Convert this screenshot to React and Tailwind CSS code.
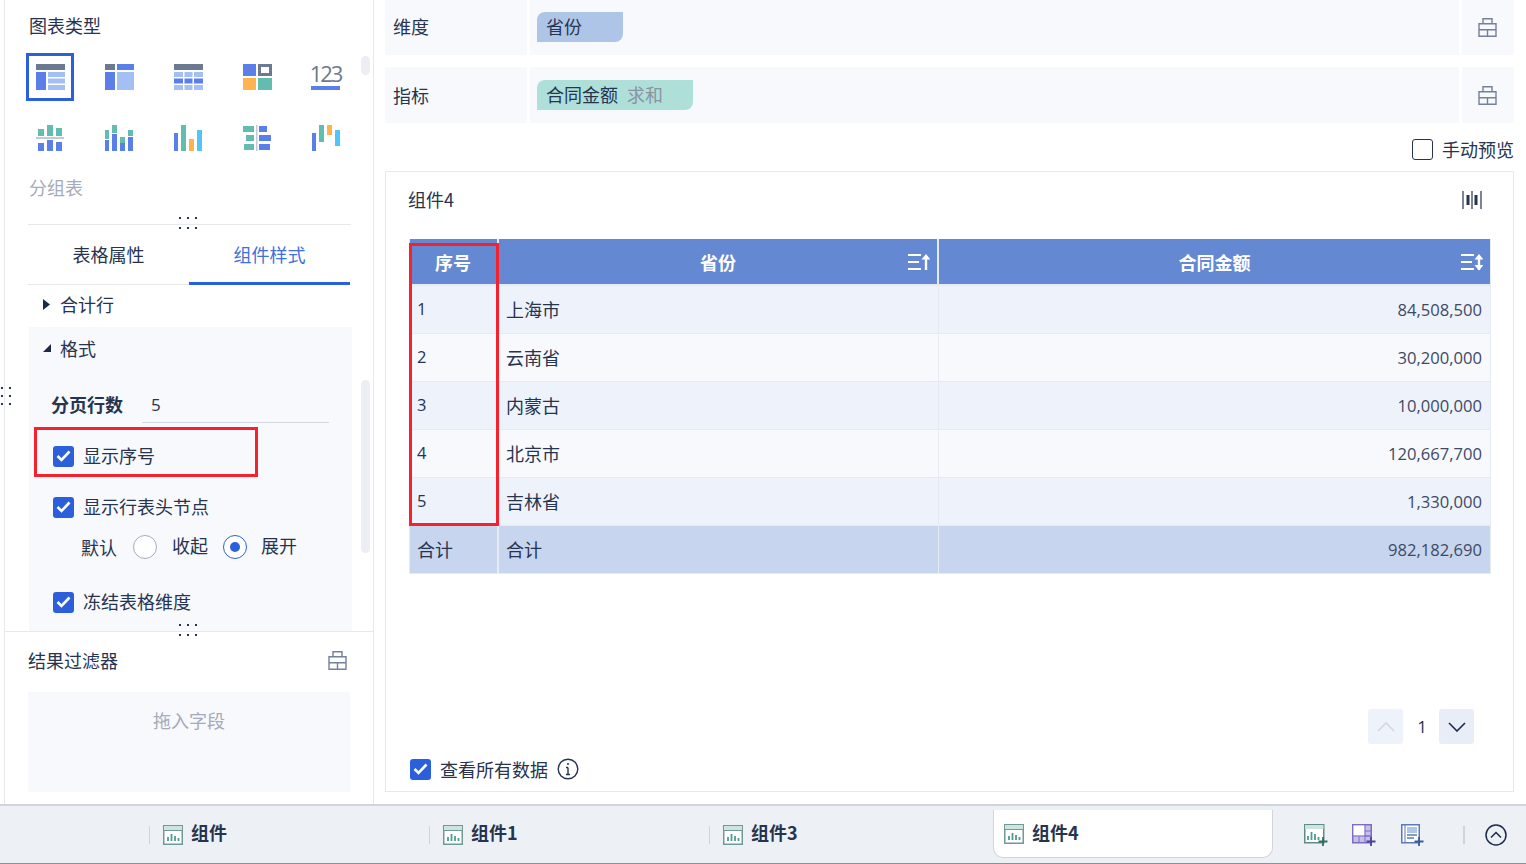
const G = "#6b7a90", B = "#5b7fe8", L = "#a3bff4", T = "#62bdb0", O = "#ffb24d", C = "#4fc6f7";

function Rects({ items, w = 30, h = 26 }) {
  return (
    <svg width={w} height={h} viewBox={`0 0 ${w} ${h}`}>
      {items.map((r, i) => (
        <rect key={i} x={r[0]} y={r[1]} width={r[2]} height={r[3]} fill={r[4]} />
      ))}
    </svg>
  );
}

const chartIcons = [
  [[0, 0, 29, 6, G], [0, 8, 10, 18, B], [12, 8, 17, 5, L], [12, 14.5, 17, 5, L], [12, 21, 17, 5, L]],
  [[0, 0, 10, 6, G], [12, 0, 17, 6, B], [0, 8, 10, 18, B], [12, 8, 17, 18, L]],
  [[0, 0, 29, 6, G], [0, 8, 9, 5, L], [10.5, 8, 8, 5, L], [20, 8, 9, 5, L], [0, 14.5, 9, 5, B], [10.5, 14.5, 8, 5, B], [20, 14.5, 9, 5, B], [0, 21, 9, 5, L], [10.5, 21, 8, 5, L], [20, 21, 9, 5, L]],
  null,
  null,
  [[2, 4, 6, 7, T], [11, 0, 6, 11, T], [20, 3, 6, 8, T], [-1, 12, 29, 2, "#c3c9d6"], [2, 18, 6, 8, B], [11, 15, 6, 11, B], [20, 17, 6, 9, B]],
  [[-1, 5, 5, 9, T], [-1, 15, 5, 11, B], [7, 0, 5, 8, T], [7, 9, 5, 17, B], [15, 12, 5, 6, T], [15, 18, 5, 8, B], [23, 5, 5, 6, T], [23, 12, 5, 14, B]],
  [[-1, 8, 5, 18, B], [7, 0, 5, 26, T], [15, 14, 5, 12, O], [23, 5, 5, 21, C]],
  [[-1, 1, 12, 6, T], [3, 10, 8, 6, T], [1, 19, 10, 6, T], [13, 0, 1.5, 26, "#c3c9d6"], [16, 1, 8, 6, B], [16, 10, 12, 6, B], [16, 19, 11, 6, B]],
  [[-1, 8, 5, 18, B], [7, 0, 5, 17, T], [15, 0, 5, 10, O], [23, 5, 5, 16, C]],
];

function ChartIcon({ i }) {
  if (i === 3)
    return (
      <svg width="30" height="26" viewBox="0 0 30 26">
        <rect x="0" y="0" width="13" height="12" fill={B} />
        <rect x="16.5" y="1.5" width="11" height="9" fill="none" stroke={G} strokeWidth="3" />
        <rect x="0" y="14" width="13" height="12" fill={O} />
        <rect x="15" y="14" width="14" height="12" fill={T} />
      </svg>
    );
  if (i === 4)
    return (
      <div className="flex flex-col items-center w-[30px] h-[26px] overflow-visible">
        <span className="text-[22px] leading-[20px] tracking-[-2px] text-[#6b7a90] font-['Open_Sans',sans-serif] font-medium -mt-[1px] -ml-[2px]">123</span>
        <span className="w-[29px] h-[4px] bg-[#5b7fe8] mt-[3px] shrink-0 -ml-[2px]"></span>
      </div>
    );
  return <Rects items={chartIcons[i]} />;
}

function Case({ color = "#74819a" }) {
  return (
    <svg width="19" height="19" viewBox="0 0 19 19" fill="none" stroke={color} strokeWidth="1.4">
      <path d="M1 5.7h17v12.6H1zM5 5.7V0.8h9v4.9M1 11.8h17M9.5 11.8v6.5" />
    </svg>
  );
}

function Check() {
  return (
    <span className="w-[21px] h-[21px] rounded-[3px] bg-[#2b5fdb] flex items-center justify-center shrink-0">
      <svg width="15" height="12" viewBox="0 0 15 12" fill="none" stroke="white" strokeWidth="2.6">
        <path d="M1.5 6l4 4 8-8.5" />
      </svg>
    </span>
  );
}

function Dots() {
  return (
    <div className="flex flex-col gap-[8px] absolute left-[174px] -translate-y-1/2 pointer-events-none">
      {[0, 1].map((k) => (
        <div key={k} className="flex gap-[6px]">
          <span className="w-[2px] h-[2px] bg-[#27344f]"></span>
          <span className="w-[2px] h-[2px] bg-[#27344f]"></span>
          <span className="w-[2px] h-[2px] bg-[#27344f]"></span>
        </div>
      ))}
    </div>
  );
}

function SortIcon({ both }) {
  return (
    <svg width="22" height="18" viewBox="0 0 22 18" fill="none" stroke="white" strokeWidth="2">
      <path d="M0 2h13M0 9h11M0 16h13" />
      <path d="M18 17V3" strokeWidth="2.4" />
      <path d="M13.5 6.5L18 1l4.5 5.5z" fill="white" stroke="none" />
      {both && <path d="M13.5 12L18 17.5l4.5-5.5z" fill="white" stroke="none" />}
    </svg>
  );
}

function TabIcon() {
  return (
    <svg width="20" height="20" viewBox="0 0 20 20" fill="none">
      <rect x="0.75" y="0.75" width="18.5" height="18.5" stroke="#6f9a96" strokeWidth="1.5" fill="#ffffff" />
      <rect x="1" y="1" width="18" height="4" fill="#cfe4df" />
      <path d="M1 5.5h18" stroke="#6f9a96" />
      <path d="M5 16v-4M8.5 16V9M12 16v-5M15.5 16v-3" stroke="#4b9d90" strokeWidth="1.8" />
    </svg>
  );
}

const rows = [
  ["1", "上海市", "84,508,500"],
  ["2", "云南省", "30,200,000"],
  ["3", "内蒙古", "10,000,000"],
  ["4", "北京市", "120,667,700"],
  ["5", "吉林省", "1,330,000"],
];

function Row({ label, pill, pillClass, padClass, labelClass }) {
  return (
    <div className="flex h-full gap-[3px]">
      <div className={`w-[142px] bg-[#f7f9fd] flex items-center pl-[8px] ${labelClass}`}>{label}</div>
      <div className={`flex-1 bg-[#f7f9fd] pl-[7px] ${padClass}`}>
        <div className={`h-[30px] rounded-tl-[8px] rounded-br-[8px] flex items-center pl-[9px] pb-[2px] ${pillClass}`}>{pill}</div>
      </div>
      <div className="w-[52px] bg-[#f7f9fd] flex items-center justify-center pr-[2px]"><Case /></div>
    </div>
  );
}

export default function App() {
  return (
    <div className="w-[1526px] h-[864px] overflow-hidden bg-white flex flex-col text-[18px] text-[#27344f] font-['Noto_Sans_CJK_SC','Noto_Sans',sans-serif]">
      <div className="flex h-[804px]">
        {/* left */}
        <div className="ml-[4px] border-l border-r border-[#e6e8ee] relative flex flex-col shrink-0 w-[370px]">
          <div className="h-[631px] flex flex-col pl-[23px] pr-[22px] relative">
            <div className="pt-[12px] h-[49px] leading-[26px]"><span className="ml-[1px]">图表类型</span></div>
            <div className="grid grid-cols-[48px_48px_48px_48px_48px] gap-x-[21px] gap-y-[13px] ml-[-2px] mt-[4px]">
              {chartIcons.map((_, i) => (
                <div key={i} className={`h-[48px] flex items-center justify-center pl-[1px] ${i === 0 ? "border-[3px] border-[#2b5fdb]" : ""}`}>
                  <ChartIcon i={i} />
                </div>
              ))}
            </div>
            <div className="h-[24px] mt-[13px] leading-[24px] text-[#a5abb8] ml-[1px]">分组表</div>
            <div className="h-[26px] border-b border-[#e6e8ee]"></div>
            <div className="flex h-[60px]">
              <div className="w-[161px] flex items-center justify-center border-b border-[#e6e8ee]">表格属性</div>
              <div className="w-[161px] flex items-center justify-center border-b-[3px] border-[#2b5fdb] text-[#3f6fdc] pt-[1px]">组件样式</div>
            </div>
            <div className="h-[42px] flex items-center ml-[15px] gap-[9px] pb-[4px]">
              <svg width="8" height="11" viewBox="0 0 8 11"><path d="M0 0l7 5.5L0 11z" fill="#1c2a4a" /></svg>
              <span>合计行</span>
            </div>
            <div className="bg-[#f7f9fd] w-[323px] ml-[1px] flex-1 overflow-hidden">
              <div className="h-[44px] flex items-center pl-[14px] gap-[9px] pb-[2px]">
                <svg width="8" height="8" viewBox="0 0 8 8"><path d="M8 0v8H0z" fill="#1c2a4a" /></svg>
                <span>格式</span>
              </div>
              <div className="flex items-center h-[41px] mt-[13px] pl-[22px]">
                <span className="font-bold w-[91px]">分页行数</span>
                <span className="w-[187px] h-[37px] pt-[5px] leading-[28px] pl-[9px] border-b border-[#d5d8e0] font-['Open_Sans',sans-serif] text-[17px]">5</span>
              </div>
              <div className="flex items-center gap-[9px] pl-[24px] h-[26px] mt-[18px]"><Check /><span className="-mt-[1px]">显示序号</span></div>
              <div className="flex items-center gap-[9px] pl-[24px] h-[26px] mt-[25px]"><Check /><span className="-mt-[1px]">显示行表头节点</span></div>
              <div className="flex items-center h-[30px] mt-[12px] pl-[52px]">
                <span className="w-[52px]">默认</span>
                <span className="w-[24px] h-[24px] rounded-full border border-[#a5abb8] bg-white"></span>
                <span className="ml-[15px] w-[51px] -mt-[4px]">收起</span>
                <span className="w-[24px] h-[24px] rounded-full border border-[#2b5fdb] bg-white flex items-center justify-center">
                  <span className="w-[10px] h-[10px] rounded-full bg-[#2b5fdb]"></span>
                </span>
                <span className="ml-[14px] -mt-[4px]">展开</span>
              </div>
              <div className="flex items-center gap-[9px] pl-[24px] h-[26px] mt-[27px]"><Check /><span className="-mt-[1px]">冻结表格维度</span></div>
            </div>
          </div>
          <div className="flex-1 border-t border-[#e6e8ee] pl-[23px] pr-[23px]">
            <div className="h-[60px] flex items-center justify-between pr-[3px] pb-[3px]">
              <span>结果过滤器</span>
              <Case />
            </div>
            <div className="h-[100px] bg-[#f7f9fd] text-center text-[#a5abb8] pt-[15px] leading-[26px]">拖入字段</div>
          </div>
          {/* overlays */}
          <div className="absolute top-[223px] left-0"><Dots /></div>
          <div className="absolute top-[630px] left-0"><Dots /></div>
          <div className="absolute left-[356px] top-[56px] w-[9px] h-[19px] rounded-[5px] bg-[#eceef3]"></div>
          <div className="absolute left-[356px] top-[380px] w-[9px] h-[173px] rounded-[5px] bg-[#eceef3]"></div>
          <div className="absolute left-[29px] top-[427px] w-[224px] h-[50px] border-[3px] border-[#f5222d]"></div>
          <div className="absolute -left-[4px] top-[387px] flex flex-col gap-[6px]">
            {[0, 1, 2].map((k) => (
              <div key={k} className="flex gap-[6px]"><span className="w-[2px] h-[2px] bg-[#27344f]"></span><span className="w-[2px] h-[2px] bg-[#27344f]"></span></div>
            ))}
          </div>
        </div>
        {/* right */}
        <div className="flex-1 pl-[12px] pr-[12px] flex flex-col ml-[-1px] min-w-0">
          <div className="h-[55px]">
            <Row label="维度" pill={<span>省份</span>} pillClass="w-[86px] bg-[#afc5e8]" padClass="pt-[12px]" labelClass="pb-[2px]" />
          </div>
          <div className="h-[12px]"></div>
          <div className="h-[56px]">
            <Row label="指标" pill={<><span>合同金额</span><span className="text-[#8b93a1] ml-[9px]">求和</span></>} pillClass="w-[156px] bg-[#aedfd9]" padClass="pt-[13px]" labelClass="" />
          </div>
          <div className="h-[48px] flex items-center justify-end gap-[9px] pt-[5px]">
            <span className="w-[21px] h-[21px] rounded-[3px] border border-[#27344f] bg-white"></span>
            <span>手动预览</span>
          </div>
          <div className="flex-1 border border-[#e6e8ee] flex flex-col relative mb-[12px]">
            <div className="h-[67px] flex items-center justify-between pl-[22px] pr-[31px] pb-[12px]">
              <span>组件4</span>
              <svg width="20" height="20" viewBox="0 0 20 20" fill="none" stroke="#27344f">
                <path d="M1 1v18M19 1v18M10 1v18" strokeWidth="1.2" />
                <path d="M6 5v10M14 5v10" strokeWidth="3" />
              </svg>
            </div>
            <div className="ml-[23px] w-[1082px] border border-[#e6eaf3] border-t-0 text-[#27344f] bg-[#e6eaf3]">
              <div className="flex h-[45px] mb-[1px] bg-[#6488d2] text-white font-bold">
                <div className="w-[89px] flex items-center justify-center border-r-2 border-[#e6eaf3] pr-[1px] pt-[2px]">序号</div>
                <div className="w-[440px] flex items-center justify-center relative border-r-2 border-[#e6eaf3] pt-[2px]">
                  省份
                  <span className="absolute right-[7px] top-[14px]"><SortIcon /></span>
                </div>
                <div className="flex-1 flex items-center justify-center relative pt-[2px]">
                  合同金额
                  <span className="absolute right-[7px] top-[14px]"><SortIcon both /></span>
                </div>
              </div>
              {rows.map((r, i) => (
                <div key={r[0]} className={`flex h-[48px] border-t border-[#e6eaf3] ${i % 2 === 0 ? "bg-[#edf2fb]" : "bg-[#f7f9fd]"}`}>
                  <div className="w-[89px] pl-[7px] flex items-center border-r-2 border-[#e6eaf3] font-['Open_Sans',sans-serif] text-[16.5px]">{r[0]}</div>
                  <div className="w-[440px] pl-[7px] flex items-center border-r border-[#e6eaf3]">{r[1]}</div>
                  <div className="flex-1 pr-[8px] pt-[2px] flex items-center justify-end font-['Open_Sans',sans-serif] text-[16.6px] text-[#3d4a66]">{r[2]}</div>
                </div>
              ))}
              <div className="flex h-[48px] border-t border-[#e6eaf3] bg-[#c7d5ef]">
                <div className="w-[89px] pl-[7px] flex items-center border-r-2 border-[#e6eaf3]">合计</div>
                <div className="w-[440px] pl-[7px] flex items-center border-r border-[#e6eaf3]">合计</div>
                <div className="flex-1 pr-[8px] pt-[2px] flex items-center justify-end font-['Open_Sans',sans-serif] text-[16.6px] text-[#3d4a66]">982,182,690</div>
              </div>
            </div>
            <div className="flex justify-end items-center pr-[39px] mt-[135px] h-[35px]">
              <span className="w-[35px] h-[35px] rounded-[3px] bg-[#edf2fb] flex items-center justify-center">
                <svg width="18" height="10" viewBox="0 0 18 10" fill="none" stroke="#d3d7df" strokeWidth="1.6"><path d="M1 9l8-8 8 8" /></svg>
              </span>
              <span className="w-[36px] text-center text-[17px] pl-[2px] font-['Open_Sans',sans-serif]">1</span>
              <span className="w-[35px] h-[35px] rounded-[3px] bg-[#e8edf7] flex items-center justify-center">
                <svg width="18" height="10" viewBox="0 0 18 10" fill="none" stroke="#1c2a4a" strokeWidth="1.6"><path d="M1 1l8 8 8-8" /></svg>
              </span>
            </div>
            <div className="flex items-center gap-[9px] ml-[24px] mt-[13px] h-[24px]">
              <Check />
              <span>查看所有数据</span>
              <svg width="22" height="22" viewBox="0 0 22 22" fill="none" stroke="#27344f" strokeWidth="1.4">
                <circle cx="11" cy="11" r="9.8" />
                <path d="M11 9.5v7M9 9.5h2M9 16.5h4" />
                <circle cx="11" cy="6" r="1" fill="#27344f" stroke="none" />
              </svg>
            </div>
          </div>
        </div>
      </div>
      {/* bottom */}
      <div className="h-[60px] bg-[#edf0f5] border-t-2 border-b border-t-[#d0d4dd] border-b-[#8d9096] flex font-bold text-[18px] relative">
        <div className="flex pl-[149px] w-[1273px]">
          {["组件", "组件1", "组件3"].map((t) => (
            <div key={t} className="w-[280px] h-full flex items-center">
              <span className="w-[1px] h-[18px] bg-[#cfd3da] mr-[13px]"></span>
              <TabIcon />
              <span className="ml-[8px] -mt-[4px]">{t}</span>
            </div>
          ))}
          <div className="ml-[4px] w-[280px] h-[48px] mt-[4px] bg-white rounded-b-[10px] border border-t-0 border-[#d0d4dd] flex items-center pl-[10px]">
            <TabIcon />
            <span className="ml-[8px] -mt-[2px]">组件4</span>
          </div>
        </div>
        <div className="flex items-center pl-[31px]">
          <svg width="24" height="22" viewBox="0 0 24 22" fill="none">
            <rect x="0.75" y="0.75" width="19" height="18" stroke="#5d8e88" strokeWidth="1.5" fill="#fff" />
            <rect x="1" y="1" width="18.5" height="4" fill="#cfe4df" />
            <path d="M4 16v-4M7.5 16V8M11 16v-6M14.5 16v-3" stroke="#4b9d90" strokeWidth="1.8" />
            <path d="M19 13v9M14.5 17.5h9" stroke="#2f6f62" strokeWidth="1.8" />
          </svg>
          <svg className="ml-[24px]" width="24" height="22" viewBox="0 0 24 22" fill="none">
            <rect x="0.75" y="0.75" width="18.5" height="18" fill="#c9c0ea" stroke="#7d6cc0" strokeWidth="1.5" />
            <rect x="1.5" y="1.5" width="11" height="10" fill="#fff" />
            <path d="M13 1v18M1 12h18M7 12v7M13 7h6M13 12h6" stroke="#7d6cc0" strokeWidth="1" />
            <path d="M19 13v9M14.5 17.5h9" stroke="#4a3fa6" strokeWidth="1.8" />
          </svg>
          <svg className="ml-[25px]" width="24" height="22" viewBox="0 0 24 22" fill="none">
            <rect x="0.75" y="0.75" width="17.5" height="18" fill="#fff" stroke="#5c79b8" strokeWidth="1.5" />
            <path d="M4 1v18" stroke="#5c79b8" />
            <rect x="6" y="3" width="10" height="6" fill="#afc5e8" />
            <path d="M6 11h10M6 14h7" stroke="#5c79b8" strokeWidth="1.4" />
            <path d="M18 13v9M13.5 17.5h9" stroke="#3a5a9f" strokeWidth="1.8" />
          </svg>
          <span className="ml-[38px] w-[2px] h-[18px] bg-[#cfd3da]"></span>
          <svg className="ml-[20px]" width="22" height="22" viewBox="0 0 22 22" fill="none" stroke="#1c2a4a" strokeWidth="1.5">
            <circle cx="11" cy="11" r="10" />
            <path d="M6 13.5l5-5 5 5" />
          </svg>
        </div>
      </div>
      <div className="absolute left-[409px] top-[243px] w-[90px] h-[283px] border-[3px] border-[#f5222d]"></div>
    </div>
  );
}
